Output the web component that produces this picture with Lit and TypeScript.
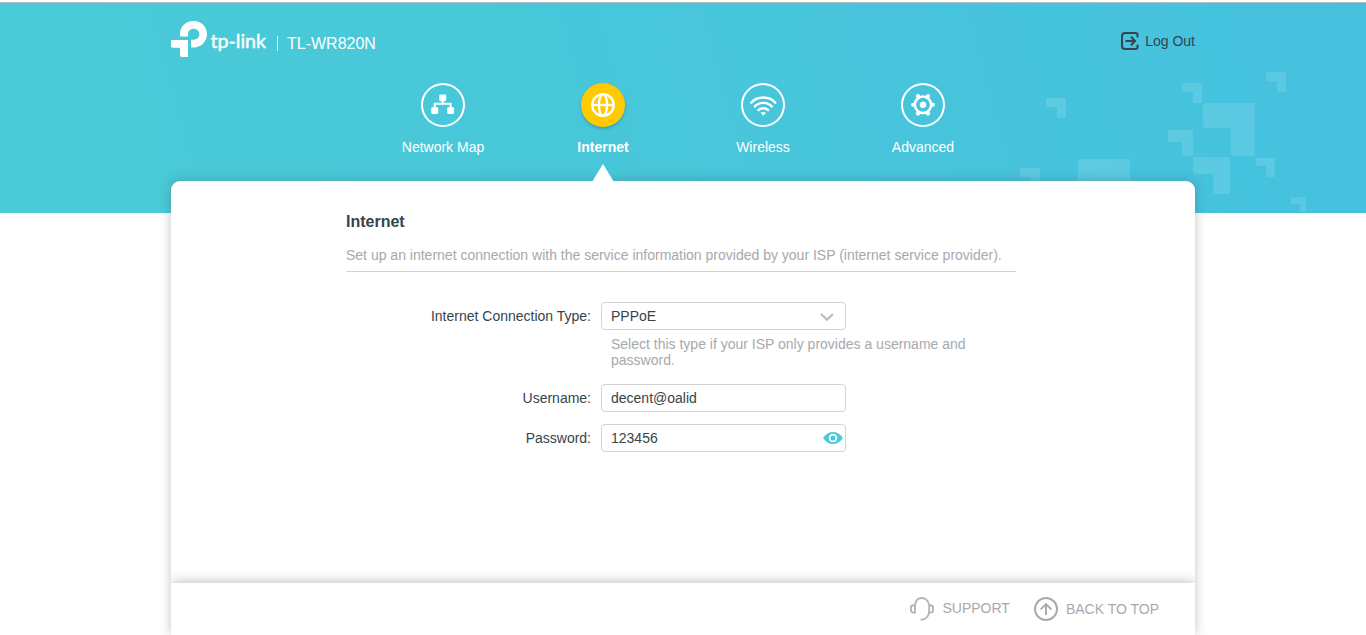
import { LitElement, html, css, svg } from "lit";
import { customElement, state } from "lit/decorators.js";

interface NavItem {
  id: string;
  label: string;
  icon: unknown;
}

// x, y, width, height, arm thickness, offset of the vertical arm
const tiles: number[][] = [
  [26, 26, 20, 20, 9, 11],
  [162, 11, 20, 20, 9, 11],
  [246, 0, 20, 20, 9.5, 11],
  [183, 31, 52, 53, 25, 28],
  [148, 58, 25, 26, 12, 14],
  [173, 85, 37, 37, 17, 20],
  [236, 86, 19, 19, 8, 10],
  [271, 125, 15, 15, 7, 9],
  [0, 96, 20, 20, 9, 11],
  [58, 87, 52, 53, 25, 28],
];

const tilePath = ([x, y, w, h, t, v]: number[]) => {
  const r = w > 30 ? 3.5 : 1.5;
  return `M${x} ${y}H${x + w}V${y + h}H${x + v + r}Q${x + v} ${y + h} ${x + v} ${y + h - r}V${y + t}H${x + r}Q${x} ${y + t} ${x} ${y + t - r}Z`;
};

const nav: NavItem[] = [
  {
    id: "map",
    label: "Network Map",
    icon: svg`<g fill="#fff"><rect x="18.2" y="11.6" width="7" height="6.6" rx="1.4"/><rect x="10.2" y="24.2" width="7" height="6.8" rx="1.4"/><rect x="26.1" y="24.2" width="7" height="6.8" rx="1.4"/></g><path d="M21.7 17v4M13.7 25v-4.3H29.6V25" fill="none" stroke="#fff" stroke-width="2"/>`,
  },
  {
    id: "internet",
    label: "Internet",
    icon: svg`<g fill="none" stroke="#fff" stroke-width="2.3"><circle cx="22" cy="22" r="10.8"/><ellipse cx="22" cy="22" rx="4.1" ry="10.8"/><path d="M11 22H33"/></g>`,
  },
  {
    id: "wireless",
    label: "Wireless",
    icon: svg`<g fill="none" stroke="#fff" stroke-width="2.4"><path d="M9.6 20.4A16.6 16.6 0 0 1 35 20.4"/><path d="M13.2 24.1A12 12 0 0 1 31.4 24.1"/><path d="M16.7 27.8A7.4 7.4 0 0 1 27.9 27.8"/></g><path d="M19.8 29.8Q21 28.4 22.3 29.5Q23.6 28.4 24.8 29.8L22.3 32.8Z" fill="#fff"/>`,
  },
  {
    id: "advanced",
    label: "Advanced",
    icon: svg`<circle cx="22" cy="21.8" r="8.2" fill="none" stroke="#fff" stroke-width="2.5"/><circle cx="22" cy="21.8" r="3.2" fill="#fff"/><g fill="#fff"><circle cx="12.1" cy="21.8" r="2"/><circle cx="31.9" cy="21.8" r="2"/><circle cx="17" cy="13" r="2.1"/><circle cx="27" cy="13" r="2.1"/><circle cx="17" cy="30.6" r="2.1"/><circle cx="27" cy="30.6" r="2.1"/></g>`,
  },
];

@customElement("app-root")
export class AppRoot extends LitElement {
  @state() private active = "internet";

  static styles = css`
    :host {
      display: block;
      height: 635px;
      overflow: hidden;
      background: #fff;
      font: 14px/16px "Liberation Sans", Arial, sans-serif;
      color: #36444b;
    }
    * { box-sizing: border-box; }
    svg { display: block; flex: none; }
    .page { height: 635px; display: flex; flex-direction: column; padding-top: 2px; }
    .header {
      flex: none;
      height: 211px;
      border-top: 1px solid #b4bcbe;
      background: linear-gradient(75deg, #4acbd6 0%, #48c6da 50%, #45c1de 100%);
    }
    .tiles { position: absolute; right: 60px; top: 72px; }
    .inner { position: relative; z-index: 1; width: 1024px; margin: 0 auto; }
    .top { display: flex; justify-content: space-between; height: 80px; color: #fff; }
    .brand { display: flex; padding-top: 18px; }
    .model { display: flex; font-size: 16px; line-height: 18px; padding: 14px 0 0 9px; gap: 8px; }
    .bar { width: 2px; height: 15px; border-left: 1px solid #e4f6fa; margin-top: 1px; }
    .logout { display: flex; align-items: center; gap: 6px; height: 20px; margin-top: 28px; color: #36444b; }
    .nav { display: flex; justify-content: center; }
    .item { width: 160px; display: flex; flex-direction: column; align-items: center; gap: 12px; color: #fff; cursor: pointer; }
    .disc { width: 44px; height: 44px; border-radius: 50%; box-shadow: inset 0 0 0 2px #fff; }
    .active .disc { background: #ffcb00; box-shadow: 0 2px 3px rgba(30, 80, 90, 0.3); }
    .active { font-weight: bold; }
    .pointer { margin-top: -3px; }
    .card {
      position: relative;
      flex: 1;
      width: 1024px;
      margin: -32px auto 0;
      background: #fff;
      border-radius: 9px 9px 0 0;
      box-shadow: 0 0 12px rgba(60, 70, 75, 0.32);
      display: flex;
      flex-direction: column;
    }
    .content { flex: 1; padding: 31px 179px 0 175px; }
    h1 { font-size: 16px; line-height: 20px; margin: 0 0 15px; }
    .intro { color: #a7a9ac; border-bottom: 1px solid #d1d3d4; height: 25px; margin: 0 0 30px; }
    .row { display: grid; grid-template-columns: 245px 245px; column-gap: 10px; align-items: center; margin-bottom: 12px; }
    .label { text-align: right; }
    .field {
      display: flex;
      align-items: center;
      justify-content: space-between;
      height: 28px;
      border: 1px solid #d1d3d4;
      border-radius: 4px;
      padding-left: 9px;
    }
    .chevron { margin: 1px 11px 0 0; }
    .eye { margin-right: 2px; }
    .hint { color: #a7a9ac; width: 370px; margin: -6px 0 16px 265px; }
    .footer {
      flex: none;
      height: 52px;
      display: flex;
      justify-content: flex-end;
      padding: 13px 36px 0;
      gap: 24px;
      color: #a7a9ac;
      box-shadow: 0 0 12px rgba(60, 70, 75, 0.4);
      background: #fff;
      clip-path: inset(-16px 0 0 0);
    }
    .link { display: flex; align-items: center; height: 26px; gap: 8px; }
    .support { height: 24px; }
    .support svg { margin-top: 2px; }
  `;

  render() {
    return html`
      <div class="page">
        <header class="header">
          <svg class="tiles" width="286" height="141" viewBox="0 0 286 141" fill="#fff" fill-opacity=".12">
            ${tiles.map((t) => svg`<path d=${tilePath(t)} />`)}
          </svg>
          <div class="inner">
            <div class="top">
              <div class="brand">
                <svg width="97" height="38" viewBox="0 0 97 38" fill="#fff">
                  <path d="M9 15.5V12.8A13.3 12.8 0 0 1 22.7 0C30.3 0 36 5.7 36 13.1C36 20.6 30.1 26.5 22.7 26.5H20V18.7H22.7C25.9 18.7 28.4 16.3 28.4 13.1C28.4 10 25.9 7.7 22.7 7.7C19.4 7.7 17 10 17 13.2V15.5Z" />
                  <path d="M0 19H17V36H10.8Q9 36 9 34.2V26.7H1.6Q0 26.7 0 25.1Z" />
                  <text x="39.5" y="27" font-family="Lato, sans-serif" font-size="19.5" stroke="#fff" stroke-width=".45" textLength="55.5" lengthAdjust="spacingAndGlyphs">tp-link</text>
                </svg>
                <div class="model"><span class="bar"></span><span>TL-WR820N</span></div>
              </div>
              <div class="logout">
                <svg width="18" height="20" viewBox="0 0 18 20" fill="none" stroke="#36444b" stroke-width="2">
                  <path d="M16.5 6.5V4Q16.5 2 14.5 2H4Q1 2 1 5V15Q1 18 4 18H14.5Q16.5 18 16.5 16V13.5" />
                  <path d="M4.5 10H14M10 5.8L14 10L10 14.2" />
                </svg>
                <span>Log Out</span>
              </div>
            </div>
            <nav class="nav">
              ${nav.map(
                (n) => html`<div class="item ${n.id === this.active ? "active" : ""}" @click=${() => (this.active = n.id)}>
                  <div class="disc"><svg width="44" height="44" viewBox="0 0 44 44">${n.icon}</svg></div>
                  <span>${n.label}</span>
                  ${n.id === this.active
                    ? html`<svg class="pointer" width="22" height="18" viewBox="0 0 22 18"><path d="M11 0L22 18H0Z" fill="#fff" /></svg>`
                    : ""}
                </div>`
              )}
            </nav>
          </div>
        </header>
        <main class="card">
          <section class="content">
            <h1>Internet</h1>
            <p class="intro">Set up an internet connection with the service information provided by your ISP (internet service provider).</p>
            <div class="row">
              <span class="label">Internet Connection Type:</span>
              <div class="field">
                <span>PPPoE</span>
                <svg class="chevron" width="14" height="10" viewBox="0 0 14 10"><path d="M1 2L7 7.6L13 2" fill="none" stroke="#bcbec0" stroke-width="2.3" /></svg>
              </div>
            </div>
            <div class="hint">Select this type if your ISP only provides a username and password.</div>
            <div class="row">
              <span class="label">Username:</span>
              <div class="field"><span>decent@oalid</span></div>
            </div>
            <div class="row">
              <span class="label">Password:</span>
              <div class="field">
                <span>123456</span>
                <svg class="eye" width="20" height="12" viewBox="0 0 20 12">
                  <path d="M0 6C3 1.8 6.2 0 10 0S17 1.8 20 6C17 10.2 13.8 12 10 12S3 10.2 0 6Z" fill="#4acbd6" />
                  <circle cx="10" cy="6" r="3.4" fill="#4acbd6" stroke="#fff" stroke-width="1.7" />
                </svg>
              </div>
            </div>
          </section>
          <footer class="footer">
            <div class="link support">
              <svg width="24" height="24" viewBox="0 0 24 24" fill="none" stroke="#b2b4b6" stroke-width="1.9">
                <path d="M5 7.8C5.6 3.6 8.3 1 12 1C16.3 1 19.2 4.7 19.2 10V13.5C19.2 18.9 16 22.6 10.5 22.9" />
                <path d="M5 7.5V15.6H3.5Q.9 15.6 .9 13V10.7Q.9 8.2 3.5 8.2H5M19.2 8.2H20.7Q23.1 8.2 23.1 10.7V13Q23.1 15.6 20.7 15.6H19" />
              </svg>
              <span>SUPPORT</span>
            </div>
            <div class="link">
              <svg width="24" height="24" viewBox="0 0 24 24" fill="none" stroke="#a7a9ac" stroke-width="1.9">
                <circle cx="12" cy="12" r="11" />
                <path d="M12 18V7.5M6.7 12.3L12 7L17.3 12.3" />
              </svg>
              <span>BACK TO TOP</span>
            </div>
          </footer>
        </main>
      </div>
    `;
  }
}
